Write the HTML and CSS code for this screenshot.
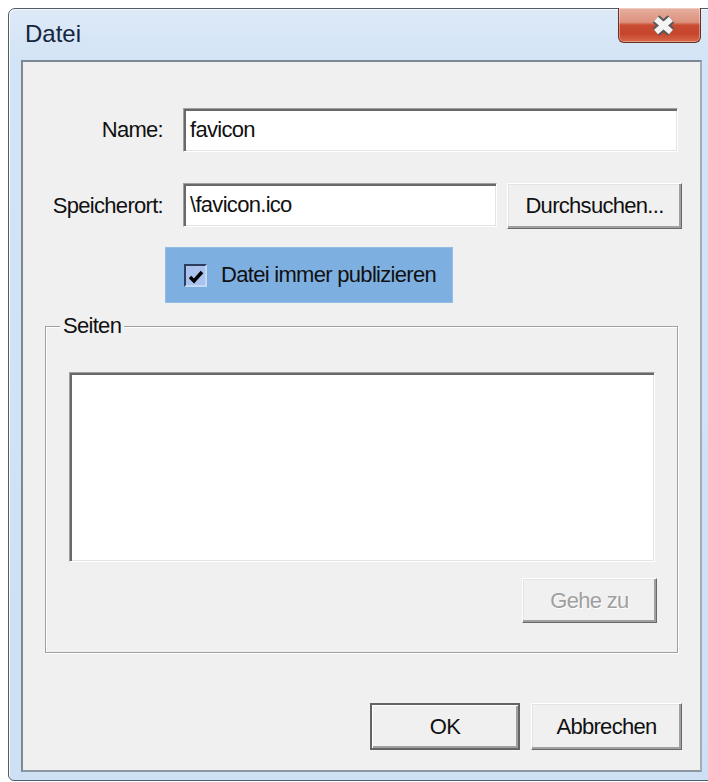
FILE: index.html
```html
<!DOCTYPE html>
<html lang="de">
<head>
<meta charset="utf-8">
<title>Datei</title>
<link rel="stylesheet" href="styles.css">
</head>
<body>
<div class="window">
  <div class="titlebar">
    <span class="title">Datei</span>
    <div class="close-btn">
      <svg width="83" height="35" viewBox="0 0 83 35">
        <path d="M38 12 L53 25 M53 12 L38 25" stroke="#5a5a5a" stroke-width="10" fill="none"/>
        <path d="M38 12 L53 25 M53 12 L38 25" stroke="#f4f4f4" stroke-width="6" fill="none"/>
      </svg>
    </div>
  </div>
  <div class="client">
    <div class="form">
      <label class="label">Name:</label>
      <div class="field"><div class="textbox name-box">favicon</div></div>
      <label class="label">Speicherort:</label>
      <div class="field">
        <div class="textbox path-box">\favicon.ico</div>
        <button class="btn browse">Durchsuchen...</button>
      </div>
    </div>
    <div class="check-panel">
      <span class="checkbox">
        <svg width="21" height="21" viewBox="0 0 21 21"><path d="M4 11 L8 15 L16 6" stroke="#000" stroke-width="3.4" fill="none"/></svg>
      </span>
      <span>Datei immer publizieren</span>
    </div>
    <div class="group">
      <span class="legend">Seiten</span>
      <div class="listbox"></div>
      <div class="group-actions">
        <button class="btn goto" disabled>Gehe zu</button>
      </div>
    </div>
    <div class="dialog-actions">
      <button class="btn ok">OK</button>
      <button class="btn cancel">Abbrechen</button>
    </div>
  </div>
</div>
</body>
</html>
```
FILE: styles.css
```css
* { box-sizing: border-box; }

html, body {
  margin: 0;
  padding: 0;
  background: #fff;
  overflow: hidden;
}

body {
  width: 708px;
  height: 782px;
  font-family: "Liberation Sans", Arial, sans-serif;
  font-size: 22px;
  letter-spacing: -0.7px;
  color: #111;
}

/* window frame */
.window {
  margin: 8px 0 0 8px;
  width: 707px;
  height: 773px;
  border: 1px solid #4f5d6b;
  border-radius: 7px 7px 6px 6px;
  background: linear-gradient(to bottom, #dde9f7 0, #d3e4f6 50px, #cde0f4 100%);
  box-shadow: inset 1px 1px 0 rgba(255, 255, 255, 0.8);
  padding: 0 12px 7px 12px;
}

.titlebar {
  display: flex;
  justify-content: space-between;
  align-items: flex-start;
  height: 51px;
  margin: 0 -12px;
  padding: 0 13px 0 16px;
}

.title {
  margin-top: 13px;
  font-size: 24px;
  line-height: 24px;
  letter-spacing: 0;
  color: #15253b;
}

.close-btn {
  width: 83px;
  height: 35px;
  margin-top: -1px;
  border: 1px solid #6c2f24;
  border-top: none;
  border-radius: 0 0 6px 6px;
  background: linear-gradient(to bottom, #e6b0a0 0%, #dc917d 42%, #c94d33 50%, #c5452c 75%, #d9684a 100%);
  box-shadow: inset 0 0 0 1px rgba(255, 255, 255, 0.35);
  overflow: hidden;
}

.close-btn svg { display: block; margin: -1px 0 0 -1px; }

/* client area */
.client {
  height: 712px;
  background: #f0f0f0;
  border: 2px solid #87919c;
  border-color: #7d8894 #a3adb8 #8d97a2 #7d8894;
  padding: 46px 18px 0 0;
}

.form {
  display: grid;
  grid-template-columns: 140px 1fr;
  column-gap: 20px;
  row-gap: 31px;
  align-items: center;
}

.label {
  text-align: right;
}

.field {
  display: flex;
  align-items: flex-start;
  gap: 10px;
}

.textbox {
  height: 44px;
  background: #fff;
  border: 1px solid;
  border-color: #a0a0a0 #fff #fff #a0a0a0;
  box-shadow: inset 2px 2px 0 #696969, inset -1px -1px 0 #e3e3e3;
  padding: 0 6px;
  display: flex;
  align-items: center;
}

.name-box { width: 495px; }
.path-box { width: 314px; }

.btn {
  height: 46px;
  padding: 0;
  font: inherit;
  letter-spacing: inherit;
  color: #111;
  background: #f0f0f0;
  border: 1px solid;
  border-color: #fff #696969 #696969 #fff;
  box-shadow: inset -2px -2px 0 #a0a0a0, inset 1px 1px 0 #e3e3e3;
}

.browse { width: 175px; }

/* highlighted checkbox */
.check-panel {
  display: flex;
  align-items: center;
  gap: 14px;
  width: 288px;
  height: 56px;
  margin: 18px 0 0 142px;
  padding-left: 18px;
  background: #7eafe1;
  border: 1px solid #93bde8;
}

.checkbox {
  width: 23px;
  height: 23px;
  background: #a9c3ee;
  border: 2px solid;
  border-color: #2d3d5c #c4d8f3 #c4d8f3 #2d3d5c;
}

.checkbox svg { display: block; }

/* group box */
.group {
  position: relative;
  width: 633px;
  height: 327px;
  margin: 23px 0 0 22px;
  padding: 45px 20px 0 23px;
  border: 1px solid #a0a0a0;
  box-shadow: 1px 1px 0 #fff, inset 1px 1px 0 #fff;
}

.legend {
  position: absolute;
  left: 14px;
  top: -14px;
  line-height: 26px;
  padding: 0 3px;
  background: #f0f0f0;
}

.listbox {
  width: 586px;
  height: 190px;
  background: #fff;
  border: 1px solid;
  border-color: #a0a0a0 #fff #fff #a0a0a0;
  box-shadow: inset 2px 2px 0 #696969, inset -1px -1px 0 #e3e3e3;
}

.group-actions {
  display: flex;
  justify-content: flex-end;
  margin-top: 16px;
}

.goto {
  width: 135px;
  height: 45px;
  color: #a0a0a0;
  text-shadow: 1px 1px 0 #fff;
}

/* OK / Abbrechen */
.dialog-actions {
  display: flex;
  justify-content: flex-end;
  gap: 11px;
  margin-top: 50px;
}

.ok {
  width: 150px;
  height: 47px;
  border: 2px solid #646464;
  box-shadow: inset 1px 1px 0 #fff, inset -2px -2px 0 #a0a0a0;
}

.cancel {
  width: 151px;
  height: 47px;
}
```
